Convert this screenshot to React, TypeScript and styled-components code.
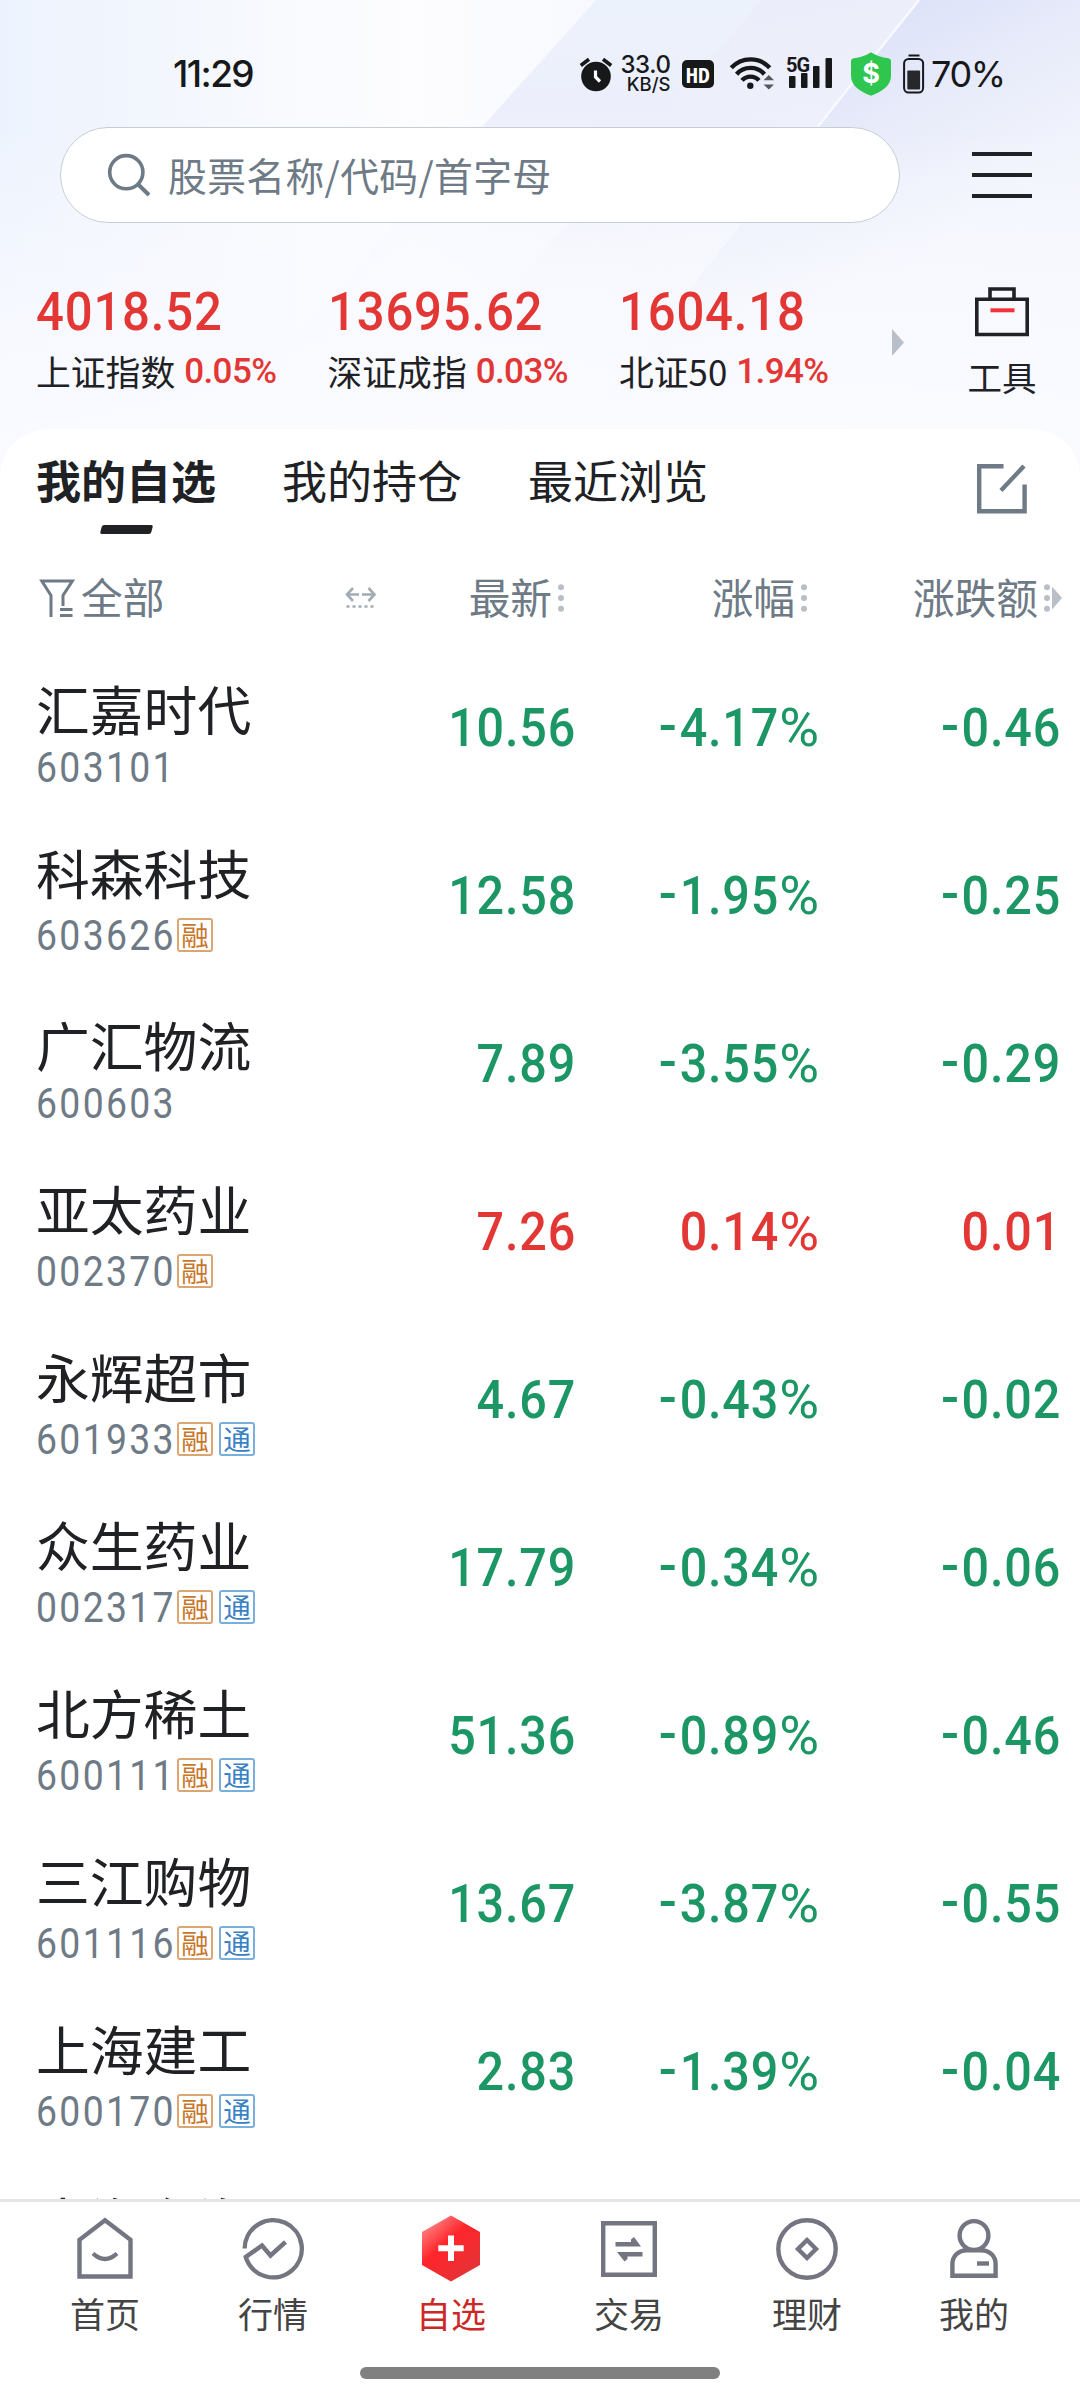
import React from "react";
import styled, { createGlobalStyle } from "styled-components";

const INK = "#202124";
const MUTED = "#6e7a86";
const UP = "#e23735";
const DOWN = "#1b9664";
const CJK = '"Noto Sans CJK SC", sans-serif';
const NUM = 'Roboto, "Noto Sans CJK SC", sans-serif';

const GlobalStyle = createGlobalStyle`
  * { box-sizing: border-box; }
  body { margin: 0; background: #fff; }
`;

const Screen = styled.div`
  position: relative;
  width: 1080px;
  height: 2400px;
  overflow: hidden;
  display: flex;
  flex-direction: column;
  background: #fff;
  color: ${INK};
  font-family: ${CJK};
`;

const Backdrop = styled.svg`
  position: absolute;
  top: 0;
  left: 0;
`;

/* ---------- status bar ---------- */

const StatusBar = styled.header`
  position: relative;
  height: 127px;
  padding: 20px 77px 0 173px;
  display: flex;
  align-items: center;
  font-family: Inter, sans-serif;
  color: #17181a;
`;

const Clock = styled.span`
  flex: 1;
  font-size: 37px;
  line-height: 44px;
  font-weight: 450;
  letter-spacing: -1.6px;
`;

const Speed = styled.div`
  width: 52px;
  margin: 0 11px 0 6px;
  display: flex;
  flex-direction: column;
  align-items: flex-end;
  font-weight: 500;
`;

const SpeedValue = styled.span`
  font-size: 24px;
  line-height: 20px;
  letter-spacing: -0.4px;
`;

const SpeedUnit = styled.span`
  font-size: 18.5px;
  line-height: 18px;
  letter-spacing: 0;
`;

const HdBadge = styled.span`
  width: 32px;
  height: 28px;
  border-radius: 5px;
  background: #17181a;
  color: #fff;
  font: 700 22px/28px "Open Sans", sans-serif;
  font-stretch: 75%;
  letter-spacing: -0.5px;
  display: flex;
  justify-content: center;
`;

const Signal = styled.div`
  position: relative;
  width: 48px;
  height: 36px;
  margin: 0 17px 0 11.5px;
`;

const SignalLabel = styled.span`
  position: absolute;
  top: -1px;
  left: 0;
  font: 700 20px/20px Roboto, sans-serif;
  letter-spacing: -1px;
`;

const Shield = styled.div`
  position: relative;
  width: 40px;
  height: 44px;
  color: #fff;
  text-align: center;
  font: 700 27px/44px Inter, sans-serif;
`;

const ShieldShape = styled.svg`
  position: absolute;
  inset: 0;
`;

const ShieldSign = styled.span`
  position: relative;
`;

const Battery = styled.span`
  font-size: 36px;
  line-height: 44px;
  letter-spacing: -1.4px;
  font-weight: 400;
  width: 72px;
  white-space: nowrap;
`;

const StatusIcon = styled.svg<{ $left?: number; $right?: number }>`
  flex: none;
  margin: 0 ${(p) => p.$right ?? 0}px 0 ${(p) => p.$left ?? 0}px;
`;

/* ---------- search ---------- */

const SearchRow = styled.div`
  position: relative;
  height: 96px;
  padding: 0 48px 0 60px;
  display: flex;
  align-items: center;
  justify-content: space-between;
`;

const SearchBox = styled.div`
  width: 840px;
  height: 96px;
  padding-left: 46px;
  border: 1px solid #c6ced5;
  border-radius: 48px;
  background: #fff;
  display: flex;
  align-items: center;
  gap: 17px;
  color: ${MUTED};
`;

const Placeholder = styled.span`
  font-size: 38.8px;
  line-height: 56px;
  letter-spacing: 0.35px;
  padding-bottom: 2px;
`;

const MenuButton = styled.div`
  width: 60px;
  display: flex;
  flex-direction: column;
  gap: 17px;
`;

const MenuLine = styled.span`
  height: 4px;
  background: #202124;
`;

/* ---------- indices ---------- */

const IndexStrip = styled.section`
  position: relative;
  height: 206px;
  padding: 56px 43px 0 36px;
  display: flex;
  align-items: flex-start;
`;

const IndexItem = styled.div`
  width: 291.5px;
  display: flex;
  flex-direction: column;
  gap: 16px;
`;

const IndexValue = styled.span`
  font: 500 54.5px/64px ${NUM};
  letter-spacing: 0.9px;
  color: ${UP};
  transform: scaleX(0.9);
  transform-origin: left;
`;

const IndexMeta = styled.span`
  display: flex;
  gap: 9px;
  height: 26px;
  align-items: center;
  white-space: nowrap;
`;

const IndexName = styled.span`
  font-size: 34.8px;
  line-height: 40px;
  padding-bottom: 3px;
`;

const IndexChange = styled.span`
  font: 500 35px/40px ${NUM};
  letter-spacing: -0.6px;
  color: ${UP};
`;

const NextArrow = styled.svg`
  margin: 50px 0 0 -19px;
`;

const Tools = styled.div`
  margin-left: auto;
  width: 70px;
  padding-top: 7px;
  display: flex;
  flex-direction: column;
  align-items: center;
  gap: 16px;
  font-size: 34.5px;
  line-height: 44px;
`;

/* ---------- panel ---------- */

const Panel = styled.main`
  position: relative;
  flex: 1;
  min-height: 0;
  display: flex;
  flex-direction: column;
  border-radius: 48px 48px 0 0;
  background: #fff;
  overflow: hidden;
`;

const Tabs = styled.nav`
  height: 105px;
  padding: 0 52px 0 36px;
  display: flex;
  gap: 66px;
  flex: none;
`;

const Tab = styled.div<{ $active?: boolean }>`
  display: flex;
  flex-direction: column;
  align-items: center;
  justify-content: space-between;
  padding-top: 23px;
  font-size: 45px;
  line-height: 56px;
  font-weight: ${(p) => (p.$active ? 700 : 400)};
`;

const TabMark = styled.span`
  width: 51px;
  height: 9px;
  border-radius: 2px;
  background: ${INK};
  transform: skewX(-15deg);
`;

const EditIcon = styled.svg`
  margin: 34px 0 0 auto;
`;

const ColumnHeads = styled.div`
  height: 109px;
  padding: 19px 18px 0 37px;
  display: grid;
  grid-template-columns: 308px 219px 243px 255px;
  align-items: center;
  flex: none;
  font-size: 41.7px;
  line-height: 56px;
  color: ${MUTED};
`;

const FilterHead = styled.div`
  display: flex;
  align-items: center;
  gap: 6px;
`;

const SortHead = styled.div`
  display: flex;
  align-items: center;
  justify-content: flex-end;
  gap: 6px;
`;

const HeadLabel = styled.span`
  padding-bottom: 4px;
`;

const HeadTail = styled.svg`
  flex: none;
`;

const WidthToggle = styled.svg`
  margin-right: auto;
`;

const StockRow = styled.div`
  height: 168px;
  padding: 0 19px 0 36px;
  display: grid;
  grid-template-columns: 334px 206px 243px 242px;
  align-items: center;
  flex: none;
`;

const StockTitle = styled.div<{ $tagged: boolean }>`
  height: 168px;
  padding-top: ${(p) => (p.$tagged ? 31 : 35)}px;
  display: flex;
  flex-direction: column;
  gap: ${(p) => (p.$tagged ? 16 : 12)}px;
`;

const StockName = styled.span`
  font-size: 53.8px;
  line-height: 60px;
`;

const StockMeta = styled.span`
  height: 34px;
  display: flex;
  align-items: center;
`;

const CodeCell = styled.span`
  width: 141px;
  padding-top: 2px;
`;

const StockCode = styled.span`
  display: inline-block;
  font: 400 42px/36px ${NUM};
  letter-spacing: 2.6px;
  color: ${MUTED};
  transform: scaleX(0.89);
  transform-origin: left;
`;

const Tag = styled.span<{ $color: string; $border: string }>`
  width: 36px;
  height: 34px;
  margin-right: 6px;
  border: 2px solid ${(p) => p.$border};
  border-radius: 3px;
  color: ${(p) => p.$color};
  font-size: 27.5px;
  line-height: 28px;
  text-align: center;
`;

const Figure = styled.span<{ $up: boolean }>`
  text-align: right;
  font: 500 54.5px/64px ${NUM};
  letter-spacing: 0.9px;
  white-space: nowrap;
  color: ${(p) => (p.$up ? UP : DOWN)};
  transform: scaleX(0.89);
  transform-origin: right;
`;

const Minus = styled.span`
  display: inline-block;
  position: relative;
  top: -2px;
  margin-right: 3px;
  transform: scaleX(1.1);
`;

const Percent = styled.span`
  display: inline-block;
  margin-left: 5px;
  font-weight: 400;
  letter-spacing: 0;
  transform: scaleX(1.12);
  transform-origin: right;
`;

/* ---------- bottom navigation ---------- */

const BottomBar = styled.footer`
  position: relative;
  height: 201px;
  border-top: 3px solid #e5e5e5;
  background: #fff;
  display: flex;
  flex-direction: column;
  align-items: center;
`;

const NavItems = styled.div`
  width: 1080px;
  height: 165px;
  padding-left: 26px;
  display: grid;
  grid-template-columns: 158px repeat(4, 178px) 156px;
`;

const NavItem = styled.div<{ $active?: boolean }>`
  padding-top: 13px;
  display: flex;
  flex-direction: column;
  align-items: center;
  gap: 8px;
  font-size: 35px;
  line-height: 44px;
  color: ${(p) => (p.$active ? "#cc2826" : "#444")};
`;

const HomeIndicator = styled.div`
  width: 360px;
  height: 12px;
  border-radius: 6px;
  background: #808080;
`;

const indices = [
  { value: "4018.52", name: "上证指数", change: "0.05%" },
  { value: "13695.62", name: "深证成指", change: "0.03%" },
  { value: "1604.18", name: "北证50", change: "1.94%" },
];

type Stock = { name: string; code: string; tags: string; last: string; pct: string; diff: string };

const stocks: Stock[] = [
  { name: "汇嘉时代", code: "603101", tags: "", last: "10.56", pct: "-4.17%", diff: "-0.46" },
  { name: "科森科技", code: "603626", tags: "融", last: "12.58", pct: "-1.95%", diff: "-0.25" },
  { name: "广汇物流", code: "600603", tags: "", last: "7.89", pct: "-3.55%", diff: "-0.29" },
  { name: "亚太药业", code: "002370", tags: "融", last: "7.26", pct: "0.14%", diff: "0.01" },
  { name: "永辉超市", code: "601933", tags: "融通", last: "4.67", pct: "-0.43%", diff: "-0.02" },
  { name: "众生药业", code: "002317", tags: "融通", last: "17.79", pct: "-0.34%", diff: "-0.06" },
  { name: "北方稀土", code: "600111", tags: "融通", last: "51.36", pct: "-0.89%", diff: "-0.46" },
  { name: "三江购物", code: "601116", tags: "融通", last: "13.67", pct: "-3.87%", diff: "-0.55" },
  { name: "上海建工", code: "600170", tags: "融通", last: "2.83", pct: "-1.39%", diff: "-0.04" },
  { name: "南海东海", code: "", tags: "", last: "", pct: "", diff: "" },
];

const tagColors: Record<string, { color: string; border: string }> = {
  融: { color: "#c8762a", border: "#dba672" },
  通: { color: "#3b82c4", border: "#7aaedb" },
};

const FigureText = ({ text, up }: { text: string; up: boolean }) => (
  <Figure $up={up}>
    {text.startsWith("-") && <Minus>-</Minus>}
    {text.replace(/[-%]/g, "")}
    {text.endsWith("%") && <Percent>%</Percent>}
  </Figure>
);

const Dots = ({ arrow }: { arrow?: boolean }) => (
  <HeadTail width={arrow ? 18 : 6} height="28" fill="#b9bfc6">
    <circle cx="3" cy="3.3" r="3" />
    <circle cx="3" cy="14" r="3" />
    <circle cx="3" cy="24.7" r="3" />
    {arrow && <path d="M8 2.5 18 14 8 25.5Z" />}
  </HeadTail>
);

const NavIcon = ({ children }: { children: React.ReactNode }) => (
  <svg width="66" height="68" viewBox="0 0 66 68" fill="none" stroke="#737681" strokeWidth="4.4">
    {children}
  </svg>
);

const navItems = [
  {
    label: "首页",
    icon: (
      <NavIcon>
        <path d="M33 5.2 58.5 24.8V61.5H7.5V24.8Z" />
        <path d="M21 38.5q12 11 24 0" />
      </NavIcon>
    ),
  },
  {
    label: "行情",
    icon: (
      <NavIcon>
        <path d="M4.6 33.5A28.6 28.6 0 1 1 5.8 42L22 30.5 30.5 40.5 45.5 27" />
      </NavIcon>
    ),
  },
  {
    label: "自选",
    active: true,
    icon: (
      <NavIcon>
        <defs>
          <linearGradient id="hex" x1="0.1" y1="0.05" x2="0.75" y2="0.9">
            <stop offset="0" stopColor="#ff8c8c" />
            <stop offset="0.45" stopColor="#ff252b" />
            <stop offset="1" stopColor="#e53236" />
          </linearGradient>
        </defs>
        <path d="M33 0.5 62 17V50L33 66.5 4 50V17Z" fill="url(#hex)" stroke="none" />
        <path d="M33 20.5V46M20.3 33.3H45.7" stroke="#fff" strokeWidth="6" />
      </NavIcon>
    ),
  },
  {
    label: "交易",
    icon: (
      <NavIcon>
        <path d="M7.2 8.2H58.8V59.8H7.2Z" />
        <path
          d="M19.5 27H35V24.5L38 22 45 31.5H19.5ZM46.5 41.5H31.5V44L28.5 46.5 21 37H46.5Z"
          fill="#737681"
          stroke="none"
        />
      </NavIcon>
    ),
  },
  {
    label: "理财",
    icon: (
      <NavIcon>
        <circle cx="33" cy="34" r="28.7" />
        <path d="M33 25 42 34 33 43 24 34Z" />
      </NavIcon>
    ),
  },
  {
    label: "我的",
    icon: (
      <NavIcon>
        <circle cx="33" cy="20.5" r="14.4" />
        <path d="M26 35.2H40C49 35.2 54.6 41.5 54.6 49V60.8H11.4V49C11.4 41.5 17 35.2 26 35.2Z" />
        <path d="M36 48.5H48" />
      </NavIcon>
    ),
  },
];

export default function App() {
  return (
    <Screen>
      <GlobalStyle />
      <Backdrop width="1080" height="520">
        <defs>
          <linearGradient id="base" x1="0" y1="0" x2="1" y2="0">
            <stop offset="0" stopColor="#edf3fe" />
            <stop offset="0.2" stopColor="#f5f8fd" />
            <stop offset="0.38" stopColor="#fdfdff" />
            <stop offset="0.6" stopColor="#f6f8fe" />
            <stop offset="1" stopColor="#f3f6fd" />
          </linearGradient>
          <linearGradient id="bandA" x1="0" y1="0" x2="0" y2="1">
            <stop offset="0" stopColor="#ecf2fc" />
            <stop offset="0.25" stopColor="#eceffb" />
            <stop offset="0.55" stopColor="#f3f5fd" stopOpacity="0.4" />
            <stop offset="1" stopColor="#f8f9fe" stopOpacity="0" />
          </linearGradient>
          <linearGradient id="bandB" gradientUnits="userSpaceOnUse" x1="700" y1="0" x2="760" y2="300">
            <stop offset="0" stopColor="#ebedfa" />
            <stop offset="0.5" stopColor="#eef1fb" />
            <stop offset="1" stopColor="#f5f7fe" stopOpacity="0" />
          </linearGradient>
          <linearGradient id="bandC" gradientUnits="userSpaceOnUse" x1="890" y1="10" x2="1010" y2="240">
            <stop offset="0" stopColor="#dde2f9" />
            <stop offset="0.4" stopColor="#e8ecfa" />
            <stop offset="0.75" stopColor="#f0f3fc" />
            <stop offset="1" stopColor="#f5f7fe" stopOpacity="0" />
          </linearGradient>
          <linearGradient id="fade" x1="0" y1="0" x2="0" y2="1">
            <stop offset="0.25" stopColor="#f9faff" stopOpacity="0" />
            <stop offset="0.65" stopColor="#f9faff" stopOpacity="0.85" />
            <stop offset="1" stopColor="#fbfbff" />
          </linearGradient>
        </defs>
        <rect width="1080" height="520" fill="url(#base)" />
        <path d="M596 0H1080V430H210Z" fill="url(#bandA)" />
        <path d="M762 0H1080V430H390Z" fill="url(#bandB)" />
        <path d="M919 0H1080V430H578Z" fill="url(#bandC)" />
        <path d="M919 0 815 130" stroke="#f8faff" strokeWidth="2.5" />
        <rect width="1080" height="520" fill="url(#fade)" />
      </Backdrop>

      <StatusBar>
        <Clock>11:29</Clock>
        <StatusIcon width="34" height="38" viewBox="0 0 34 38" fill="none" stroke="#17181a" strokeWidth="3.6">
          <circle cx="17" cy="21.5" r="14.8" fill="#17181a" stroke="none" />
          <path d="M1.8 10.5 10 4.2M24 4.2 32.2 10.5" />
          <path d="M16.5 15.5V22L21 26.5" stroke="#fff" strokeWidth="3.2" />
        </StatusIcon>
        <Speed>
          <SpeedValue>33.0</SpeedValue>
          <SpeedUnit>KB/S</SpeedUnit>
        </Speed>
        <HdBadge>HD</HdBadge>
        <StatusIcon $left={15} width="46" height="38" viewBox="0 0 46 38" fill="none" stroke="#17181a" strokeWidth="4.4">
          <path d="M2.3 12.8A26 26 0 0 1 40.7 12.8M7.6 19.2A18.5 18.5 0 0 1 35.4 19.2M13 25.4A11.4 11.4 0 0 1 30 25.4" />
          <circle cx="21.3" cy="30.8" r="3.2" fill="#17181a" stroke="none" />
          <path d="M34.5 25.2 39.8 20 45 25.2ZM34.5 29.4 39.8 34.6 45 29.4Z" fill="#55585c" stroke="none" />
        </StatusIcon>
        <Signal>
          <SignalLabel>5G</SignalLabel>
          <svg width="48" height="36" fill="#17181a">
            <rect x="3" y="20" width="6.5" height="12" rx="1" />
            <rect x="15" y="17" width="6.5" height="15" rx="1" />
            <rect x="27" y="10" width="6.5" height="22" rx="1" />
            <rect x="39.5" y="2" width="6.5" height="30" rx="1" />
          </svg>
        </Signal>
        <Shield>
          <ShieldShape width="40" height="44" viewBox="0 0 40 44">
            <path
              d="M20 0.3C25 3.5 31 5.6 37.3 6.3Q40 6.8 40 9.5V24C40 34 30 40 20 43.8 10 40 0 34 0 24V9.5Q0 6.8 2.7 6.3C9 5.6 15 3.5 20 0.3Z"
              fill="#2fc64f"
            />
          </ShieldShape>
          <ShieldSign>$</ShieldSign>
        </Shield>
        <StatusIcon $left={12} $right={6} width="22" height="40" viewBox="0 0 22 40" fill="none" stroke="#17181a">
          <path d="M5.5 1.5H16.5" strokeWidth="2" />
          <rect x="1.1" y="5" width="19" height="33.6" rx="4.5" strokeWidth="2" />
          <rect x="4.3" y="16.5" width="12.8" height="19" rx="1" fill="#26282b" stroke="none" />
        </StatusIcon>
        <Battery>70%</Battery>
      </StatusBar>

      <SearchRow>
        <SearchBox>
          <svg width="44" height="44" viewBox="0 0 44 44" fill="none" stroke={MUTED} strokeWidth="3.6">
            <circle cx="19.3" cy="19.2" r="16.6" />
            <path d="M31 31.2 42 42" strokeWidth="4" />
          </svg>
          <Placeholder>股票名称/代码/首字母</Placeholder>
        </SearchBox>
        <MenuButton>
          <MenuLine />
          <MenuLine />
          <MenuLine />
        </MenuButton>
      </SearchRow>

      <IndexStrip>
        {indices.map((item) => (
          <IndexItem key={item.name}>
            <IndexValue>{item.value}</IndexValue>
            <IndexMeta>
              <IndexName>{item.name}</IndexName>
              <IndexChange>{item.change}</IndexChange>
            </IndexMeta>
          </IndexItem>
        ))}
        <NextArrow width="12" height="27">
          <path d="M0 0 12 13.5 0 27Z" fill="#b9bfc8" />
        </NextArrow>
        <Tools>
          <svg width="54" height="52" fill="none" stroke={INK} strokeWidth="3.6">
            <path d="M1.8 13.2H52.2V48.5H1.8ZM15 13V3H39V13" />
            <path d="M15.5 24.3H39.5" stroke="#f0323a" strokeWidth="4" />
          </svg>
          工具
        </Tools>
      </IndexStrip>

      <Panel>
        <Tabs>
          <Tab $active>
            我的自选
            <TabMark />
          </Tab>
          <Tab>我的持仓</Tab>
          <Tab>最近浏览</Tab>
          <EditIcon width="51" height="52" fill="none" stroke={MUTED} strokeWidth="4.4">
            <path d="M26.5 3.2H2.2V48.3H47.6V21.5" />
            <path d="M24 27.5 47 3" />
          </EditIcon>
        </Tabs>
        <ColumnHeads>
          <FilterHead>
            <svg width="38" height="40" fill="none" stroke={MUTED} strokeWidth="3">
              <path d="M14 39V17.5L4.8 3H35.4L26 17.5V28M23 31.5H35.5M23 37.5H35.5" />
            </svg>
            <HeadLabel>全部</HeadLabel>
          </FilterHead>
          <SortHead>
            <WidthToggle width="32" height="24" fill="none" stroke="#a3abb3" strokeWidth="2.6">
              <path d="M14 8.5H2M8 2 2 8.5 8 15M17 8.5H29.5M23.5 2 29.5 8.5 23.5 15" />
              <path d="M1.5 20.5H30" strokeDasharray="3 3" />
            </WidthToggle>
            <HeadLabel>最新</HeadLabel>
            <Dots />
          </SortHead>
          <SortHead>
            <HeadLabel>涨幅</HeadLabel>
            <Dots />
          </SortHead>
          <SortHead>
            <HeadLabel>涨跌额</HeadLabel>
            <Dots arrow />
          </SortHead>
        </ColumnHeads>
        {stocks.map((s) => {
          const up = !s.diff.startsWith("-");
          return (
            <StockRow key={s.name}>
              <StockTitle $tagged={s.tags !== ""}>
                <StockName>{s.name}</StockName>
                <StockMeta>
                  <CodeCell>
                    <StockCode>{s.code}</StockCode>
                  </CodeCell>
                  {[...s.tags].map((t) => (
                    <Tag key={t} $color={tagColors[t].color} $border={tagColors[t].border}>
                      {t}
                    </Tag>
                  ))}
                </StockMeta>
              </StockTitle>
              <FigureText text={s.last} up={up} />
              <FigureText text={s.pct} up={up} />
              <FigureText text={s.diff} up={up} />
            </StockRow>
          );
        })}
      </Panel>

      <BottomBar>
        <NavItems>
          {navItems.map((item) => (
            <NavItem key={item.label} $active={item.active}>
              {item.icon}
              {item.label}
            </NavItem>
          ))}
        </NavItems>
        <HomeIndicator />
      </BottomBar>
    </Screen>
  );
}
